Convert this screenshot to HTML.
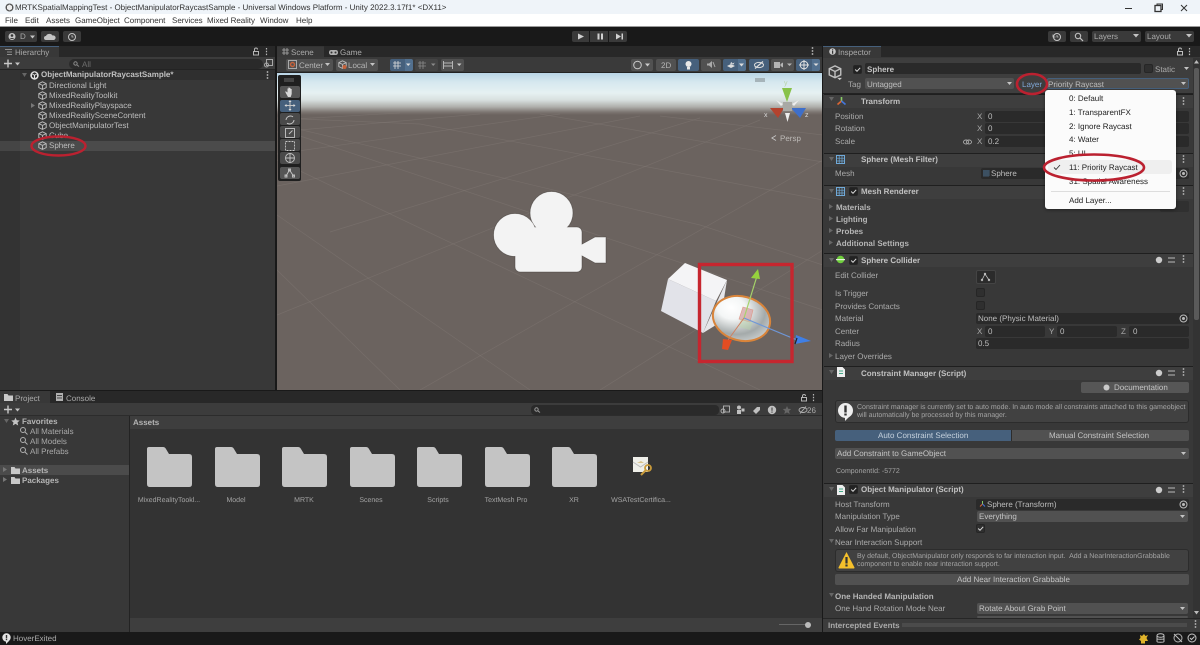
<!DOCTYPE html>
<html><head><meta charset="utf-8"><style>
html,body{margin:0;padding:0;background:#191919;overflow:hidden}
#r{position:relative;width:1200px;height:645px;overflow:hidden;font:8px/12px "Liberation Sans",sans-serif;color:#bdbdbd;text-rendering:geometricPrecision;filter:blur(.35px)}
#r div{position:absolute;box-sizing:border-box}
.t{white-space:nowrap;height:12px;margin-top:1px}
.b{font-weight:bold;color:#c0c0c0}
.k{color:#222}
.h{left:824px;width:369px;height:14px;background:#3e3e3e;border-top:1px solid #1f1f1f}
.f{background:#2a2a2a;height:11px;border-radius:2px}
.d{background:#515151;height:11px;border-radius:2px}
.p{background:#4d4d4d;border-radius:2px}
.bl{background:#46607c;border-radius:2px}
.c{background:#2f2f2f;border:1px solid #262626;border-radius:2px;width:9px;height:9px}
svg{position:absolute;overflow:visible}
</style></head><body><div id="r">
<!-- title + menu -->
<div style="left:0;top:0;width:1200px;height:14px;background:#eff4f9"></div>
<div style="left:0;top:14px;width:1200px;height:12px;background:#fff"></div>
<div style="left:0;top:26px;width:1200px;height:1px;background:#9a9a9a"></div>
<svg style="left:5px;top:3px" width="9" height="9" viewBox="0 0 9 9"><circle cx="4.500" cy="4.500" r="4" fill="#555"/><path d="M4.500 1.500L7 3v3L4.500 7.500 2 6V3z" fill="#eee"/></svg>
<div class="t k" style="left:15px;top:1px;color:#333">MRTKSpatialMappingTest - ObjectManipulatorRaycastSample - Universal Windows Platform - Unity 2022.3.17f1* &lt;DX11&gt;</div>
<div class="t k" style="left:5px;top:14px;color:#333">File</div>
<div class="t k" style="left:25px;top:14px;color:#333">Edit</div>
<div class="t k" style="left:46px;top:14px;color:#333">Assets</div>
<div class="t k" style="left:75px;top:14px;color:#333">GameObject</div>
<div class="t k" style="left:124px;top:14px;color:#333">Component</div>
<div class="t k" style="left:172px;top:14px;color:#333">Services</div>
<div class="t k" style="left:207px;top:14px;color:#333">Mixed Reality</div>
<div class="t k" style="left:260px;top:14px;color:#333">Window</div>
<div class="t k" style="left:296px;top:14px;color:#333">Help</div>
<svg style="left:1120px;top:2px" width="80" height="12" viewBox="0 0 80 12" fill="none" stroke="#333"><path d="M5 6.500h7" stroke-width="1"/><rect x="35" y="3.500" width="6" height="6" stroke-width="1.300"/><path d="M37 3.500V2h5.500v5.500H41"/><path d="M61 3l6 6M67 3l-6 6" stroke-width="1"/></svg>

<!-- main toolbar -->
<div style="left:0;top:27px;width:1200px;height:19px;background:#191919"></div>
<div class="p" style="left:5px;top:31px;width:32px;height:11px;background:#3a3a3a"></div>
<svg style="left:8px;top:32px" width="30" height="9" viewBox="0 0 30 9"><circle cx="4" cy="4.500" r="3.500" fill="#c4c4c4"/><circle cx="4" cy="3.500" r="1.300" fill="#333"/><path d="M1.800 7a2.500 2 0 014.400 0" fill="#333"/><path d="M22 3.500h5l-2.500 3z" fill="#c4c4c4"/></svg>
<div class="t" style="left:20px;top:30px;color:#aaa">D</div>
<div class="p" style="left:41px;top:31px;width:18px;height:11px;background:#3a3a3a"></div>
<svg style="left:44px;top:33px" width="12" height="7" viewBox="0 0 12 7"><path d="M2 7a2 2 0 010-4 3.500 3 0 016.500-.5A2.300 2.300 0 0110 7z" fill="#c4c4c4"/></svg>
<div class="p" style="left:63px;top:31px;width:18px;height:11px;background:#3a3a3a"></div>
<svg style="left:67px;top:32px" width="10" height="10" viewBox="0 0 10 10" fill="none" stroke="#c4c4c4"><circle cx="5" cy="5" r="3.500"/><path d="M5 3v2h1.500" stroke-width=".8"/></svg>
<div class="p" style="left:572px;top:31px;width:17px;height:11px;background:#3a3a3a;border-radius:2px 0 0 2px"></div>
<div class="p" style="left:590px;top:31px;width:18px;height:11px;background:#3a3a3a;border-radius:0"></div>
<div class="p" style="left:609px;top:31px;width:18px;height:11px;background:#3a3a3a;border-radius:0 2px 2px 0"></div>
<svg style="left:572px;top:31px" width="56" height="11" viewBox="0 0 56 11" fill="#d0d0d0"><path d="M6 2.500l6 3-6 3z"/><rect x="25.500" y="2.500" width="2" height="6"/><rect x="29" y="2.500" width="2" height="6"/><path d="M44 2.500l5 3-5 3z"/><rect x="49.500" y="2.500" width="1.500" height="6"/></svg>
<div class="p" style="left:1048px;top:31px;width:18px;height:11px;background:#3a3a3a"></div>
<svg style="left:1052px;top:32px" width="10" height="10" viewBox="0 0 10 10" fill="none" stroke="#c8c8c8"><circle cx="5" cy="5" r="3.500"/><path d="M5 3v2h1.500M1 2.500V5h2.500" stroke-width=".8"/></svg>
<div class="p" style="left:1070px;top:31px;width:18px;height:11px;background:#3a3a3a"></div>
<svg style="left:1074px;top:32px" width="10" height="10" viewBox="0 0 10 10" fill="none" stroke="#c8c8c8"><circle cx="4" cy="4" r="2.700"/><path d="M6 6l3 3" stroke-width="1.200"/></svg>
<div class="p" style="left:1092px;top:31px;width:49px;height:11px;background:#3a3a3a"></div>
<div class="t" style="left:1094px;top:30px;color:#aaa">Layers</div>
<svg style="left:1133px;top:34px" width="6" height="4"><path d="M0 0h6L3 3.500z" fill="#c4c4c4"/></svg>
<div class="p" style="left:1145px;top:31px;width:49px;height:11px;background:#3a3a3a"></div>
<div class="t" style="left:1147px;top:30px;color:#aaa">Layout</div>
<svg style="left:1186px;top:34px" width="6" height="4"><path d="M0 0h6L3 3.500z" fill="#c4c4c4"/></svg>

<!-- hierarchy -->
<div style="left:0;top:46px;width:275px;height:344px;background:#383838"></div>
<div style="left:0;top:46px;width:275px;height:11px;background:#282828"></div>
<div style="left:0;top:46px;width:59px;height:12px;background:#383838;border-top:1px solid #46607c"></div>
<svg style="left:5px;top:49px" width="8" height="6" stroke="#aaa" stroke-width=".8"><path d="M0 .5h7M2 3h5M2 5.500h5"/></svg>
<div class="t" style="left:15px;top:46px;color:#aaa">Hierarchy</div>
<svg style="left:252px;top:47px" width="18" height="9" viewBox="0 0 18 9" fill="none" stroke="#b5b5b5"><rect x="1.500" y="4.500" width="5" height="3.500"/><path d="M2.500 4.500V2.500a1.500 1.500 0 013 0"/><path d="M14.500 1v1.500M14.500 3.800v1.500M14.500 6.600v1.500" stroke-width="1.200"/></svg>
<div style="left:0;top:57px;width:275px;height:13px;background:#3c3c3c;border-bottom:1px solid #232323"></div>
<svg style="left:4px;top:59px" width="16" height="9" viewBox="0 0 16 9"><path d="M4 .5v8M0 4.500h8" stroke="#c8c8c8" stroke-width="1.400"/><path d="M11 3.500h5l-2.500 3z" fill="#c4c4c4"/></svg>
<div style="left:69px;top:59px;width:194px;height:10px;background:#2a2a2a;border-radius:5px"></div>
<div class="t" style="left:82px;top:57.500px;color:#6f6f6f">All</div>
<svg style="left:73px;top:61px" width="7" height="6" fill="none" stroke="#888"><circle cx="2.500" cy="2.500" r="1.700"/><path d="M4 4l2 1.500"/></svg>
<svg style="left:264px;top:59px" width="9" height="9" fill="none" stroke="#a8a8a8"><rect x="2.500" y=".5" width="6" height="6"/><circle cx="2.500" cy="6" r="2"/></svg>
<div style="left:0;top:70px;width:275px;height:10px;background:#2f2f2f"></div>
<div style="left:0;top:70px;width:20px;height:320px;background:#333"></div>
<div style="left:20px;top:141px;width:255px;height:10px;background:#4b4b4b"></div>
<div style="left:0;top:141px;width:20px;height:10px;background:#454545"></div>
<svg style="left:22px;top:73px" width="5" height="5"><path d="M0 0h5L2.500 4z" fill="#666"/></svg>
<svg style="left:30px;top:71px" width="9" height="9" viewBox="0 0 9 9"><circle cx="4.500" cy="4.500" r="4.200" fill="#e4e4e4"/><path d="M4.500 1.200L2.200 2.500 4.500 3.800 6.800 2.500zM2 3.300v2.600l2 1.200V4.500zM7 3.300v2.600L5 7.100V4.500z" fill="#333"/></svg>
<div class="t b" style="left:41px;top:68px">ObjectManipulatorRaycastSample*</div>
<svg style="left:266px;top:71px" width="3" height="9" fill="#bbb"><circle cx="1.500" cy="1" r=".9"/><circle cx="1.500" cy="4" r=".9"/><circle cx="1.500" cy="7" r=".9"/></svg>
<svg width="0" height="0"><defs><g id="cu" fill="none" stroke="#c0c0c0" stroke-width=".9"><path d="M4.500.8L8.200 2.600v4L4.500 8.400.8 6.600v-4zM.8 2.600l3.700 1.800 3.700-1.800M4.500 4.400v4"/></g></defs></svg>
<svg style="left:38px;top:81px" width="9" height="9"><use href="#cu"/></svg>
<svg style="left:38px;top:91px" width="9" height="9"><use href="#cu"/></svg>
<svg style="left:38px;top:101px" width="9" height="9"><use href="#cu"/></svg>
<svg style="left:38px;top:111px" width="9" height="9"><use href="#cu"/></svg>
<svg style="left:38px;top:121px" width="9" height="9"><use href="#cu"/></svg>
<svg style="left:38px;top:131px" width="9" height="9"><use href="#cu"/></svg>
<svg style="left:38px;top:141px" width="9" height="9"><use href="#cu"/></svg>
<svg style="left:31px;top:103px" width="5" height="6"><path d="M0 0l4 2.500L0 5z" fill="#777"/></svg>
<div class="t" style="left:49px;top:79px">Directional Light</div>
<div class="t" style="left:49px;top:89px">MixedRealityToolkit</div>
<div class="t" style="left:49px;top:99px">MixedRealityPlayspace</div>
<div class="t" style="left:49px;top:109px">MixedRealitySceneContent</div>
<div class="t" style="left:49px;top:119px">ObjectManipulatorTest</div>
<div class="t" style="left:49px;top:129px">Cube</div>
<div class="t" style="left:49px;top:139px">Sphere</div>
<svg style="left:0;top:0" width="1200" height="645" fill="none" stroke="#bb2130" stroke-width="2.400"><ellipse cx="58.500" cy="146" rx="27" ry="9.500"/></svg>

<!-- scene -->
<div style="left:275px;top:46px;width:2px;height:344px;background:#191919"></div>
<div style="left:277px;top:46px;width:546px;height:11px;background:#282828"></div>
<div style="left:277px;top:46px;width:47px;height:12px;background:#383838;border-top:1px solid #333"></div>
<div class="t" style="left:291px;top:46px;color:#aaa">Scene</div>
<div class="t" style="left:340px;top:46px;color:#aaa">Game</div>
<svg style="left:282px;top:48px" width="7" height="7" stroke="#aaa" stroke-width=".8"><path d="M2 0v7M5 0v7M0 2h7M0 5h7"/></svg>
<svg style="left:329px;top:50px" width="9" height="5"><rect width="9" height="5" rx="2.300" fill="#b0b0b0"/><circle cx="2.500" cy="2.500" r="1" fill="#333"/><circle cx="6.500" cy="2.500" r="1" fill="#333"/></svg>
<svg style="left:811px;top:47px" width="3" height="9" fill="#bbb"><circle cx="1.500" cy="1" r=".9"/><circle cx="1.500" cy="4" r=".9"/><circle cx="1.500" cy="7" r=".9"/></svg>
<div style="left:277px;top:57px;width:546px;height:16px;background:#3a3a3a;border-bottom:1px solid #222"></div>
<div class="p" style="left:286px;top:59px;width:47px;height:12px;background:#515151"></div>
<div class="t" style="left:299px;top:59px;color:#b5b5b5">Center</div>
<svg style="left:288px;top:60px" width="10" height="10" fill="none"><rect x=".5" y=".5" width="8" height="8" stroke="#aaa"/><circle cx="4.500" cy="4.500" r="2" stroke="#c6623a" stroke-width="1.400"/></svg>
<svg style="left:325px;top:63px" width="6" height="4"><path d="M0 0h5L2.500 3z" fill="#c4c4c4"/></svg>
<div class="p" style="left:336px;top:59px;width:42px;height:12px;background:#515151"></div>
<div class="t" style="left:348px;top:59px;color:#b5b5b5">Local</div>
<svg style="left:338px;top:60px" width="10" height="10"><use href="#cu"/><circle cx="6.500" cy="7" r="2" fill="#c6623a"/></svg>
<svg style="left:370px;top:63px" width="6" height="4"><path d="M0 0h5L2.500 3z" fill="#c4c4c4"/></svg>
<div class="bl" style="left:390px;top:59px;width:15px;height:12px;border-radius:2px 0 0 2px"></div>
<div class="bl" style="left:405px;top:59px;width:8px;height:12px;border-radius:0 2px 2px 0;background:#52708f"></div>
<svg style="left:393px;top:61px" width="18" height="8" stroke="#dcdcdc" stroke-width=".8"><path d="M2 0v8M5 0v8M0 2h8M0 5h8"/><path d="M13 2.500h4.500L15.200 5z" fill="#ddd" stroke="none"/></svg>
<div class="p" style="left:415px;top:59px;width:23px;height:12px;background:#444"></div>
<svg style="left:418px;top:61px" width="18" height="8" stroke="#8a8a8a" stroke-width=".8"><path d="M2 0v8M5 0v8M0 2h8M0 5h8"/><path d="M13 2.500h4.500L15.200 5z" fill="#8a8a8a" stroke="none"/></svg>
<div class="p" style="left:441px;top:59px;width:23px;height:12px;background:#515151"></div>
<svg style="left:443px;top:61px" width="19" height="8" stroke="#b5b5b5"><path d="M.5 0v8M9.500 0v8M1 2h8M1 5h8"/><path d="M14 2.500h4.500L16.200 5z" fill="#ccc" stroke="none"/></svg>
<div class="p" style="left:631px;top:59px;width:22px;height:12px;background:#515151"></div>
<svg style="left:633px;top:60px" width="18" height="10" fill="none" stroke="#ccc"><circle cx="4.500" cy="5" r="3.800"/><path d="M12 3.500h5l-2.500 3z" fill="#ccc" stroke="none"/></svg>
<div class="p" style="left:656px;top:59px;width:20px;height:12px;background:#515151"></div>
<div class="t" style="left:661px;top:59px;color:#b5b5b5">2D</div>
<div class="bl" style="left:678px;top:59px;width:21px;height:12px"></div>
<svg style="left:684px;top:60px" width="9" height="10" fill="#e8e8e8"><circle cx="4.500" cy="4" r="3"/><rect x="3" y="7" width="3" height="2.500"/></svg>
<div class="p" style="left:701px;top:59px;width:20px;height:12px;background:#515151"></div>
<svg style="left:707px;top:61px" width="9" height="8" fill="#aaa"><path d="M0 2.500h2L5 0v7L2 4.500H0z"/><path d="M6 1l2 5" stroke="#aaa"/></svg>
<div class="bl" style="left:723px;top:59px;width:15px;height:12px;border-radius:2px 0 0 2px"></div>
<div class="bl" style="left:738px;top:59px;width:8px;height:12px;border-radius:0 2px 2px 0;background:#52708f"></div>
<svg style="left:726px;top:60px" width="19" height="10" fill="#ddd"><path d="M1 6l4-2 4 2-4 2zM4 3.500l1.500-1.500 1 1.500 2-1-1 2z"/><path d="M13 3.500h5l-2.500 3z"/></svg>
<div class="bl" style="left:749px;top:59px;width:20px;height:12px"></div>
<svg style="left:754px;top:61px" width="11" height="8" fill="none" stroke="#ddd"><ellipse cx="5" cy="4" rx="4.500" ry="2.600"/><path d="M1 7.500L9 .5" stroke-width="1.200"/></svg>
<div class="p" style="left:771px;top:59px;width:23px;height:12px;background:#515151"></div>
<svg style="left:774px;top:61px" width="19" height="8" fill="#b5b5b5"><path d="M0 1h6v6H0zM6.500 3L9 1.500v5L6.500 5z"/><path d="M13 2.500h5L15.500 5z"/></svg>
<div class="bl" style="left:796px;top:59px;width:16px;height:12px;border-radius:2px 0 0 2px"></div>
<div class="bl" style="left:812px;top:59px;width:8px;height:12px;border-radius:0 2px 2px 0;background:#52708f"></div>
<svg style="left:799px;top:60px" width="20" height="10" fill="none" stroke="#e0e0e0"><circle cx="5" cy="5" r="3.800"/><path d="M5 0v10M0 5h10"/><path d="M14.500 3.500h5L17 6z" fill="#ddd" stroke="none"/></svg>

<div style="left:277px;top:73px;width:546px;height:317px;background:linear-gradient(to bottom,#b8d4e6 0,#d6e8ef 9px,#e6f1f2 20px,#d8e0df 27px,#aeaeaa 34px,#7d7672 39px,#6b635f 42px,#6b635f 100%)"></div>
<svg style="left:277px;top:73px;clip-path:inset(0 0 0 0)" width="546" height="317" viewBox="277 73 546 317" fill="none" stroke="#857c77" stroke-opacity=".45" stroke-width=".7">
<path d="M277 132L480 114M277 154L560 114M277 186L640 116M330 232L700 118M277 315L760 120M420 390L823 160M600 390L823 250M277 120L400 113"/>
<path d="M277 118L420 124 823 200M277 124L700 225 823 265M300 136L823 310M277 160L760 390M277 215L530 390M277 270L400 390M540 114L823 162M660 116L823 135"/>
</svg>
<!-- tool palette -->
<div style="left:278px;top:75px;width:23px;height:106px;background:#1f1f1f;border-radius:2px"></div>
<div style="left:284px;top:78px;width:10px;height:4px;background:#444"></div>
<div class="p" style="left:279.500px;top:86px;width:20px;height:12px;background:#555"></div>
<div class="bl" style="left:279.500px;top:100px;width:20px;height:12px;background:#46607c"></div>
<div class="p" style="left:279.500px;top:113px;width:20px;height:12px;background:#4a4a4a"></div>
<div class="p" style="left:279.500px;top:126px;width:20px;height:12px;background:#4a4a4a"></div>
<div class="p" style="left:279.500px;top:139px;width:20px;height:12px;background:#4a4a4a"></div>
<div class="p" style="left:279.500px;top:152px;width:20px;height:12px;background:#4a4a4a"></div>
<div class="p" style="left:279.500px;top:167px;width:20px;height:12px;background:#555"></div>
<svg style="left:280px;top:86px" width="20" height="93" viewBox="0 0 20 93" fill="none" stroke="#c4c4c4" stroke-width=".9">
<path d="M5.500 5l2 1.500V2.500h1V6V1.500h1V6V2h1v4.500V3h1.200v5l-1 3H8L5.500 6.500z" fill="#d8d8d8" stroke="none"/>
<path d="M10 15.500v8M6 19.500h8" stroke-width="1"/><path d="M10 14l1.500 2h-3zM10 25l1.500-2h-3zM4.500 19.500l2-1.500v3zM15.500 19.500l-2-1.500v3z" fill="#ddd" stroke="none"/>
<path d="M6 34a4.500 4.500 0 017-3.200M14 34a4.500 4.500 0 01-7 3.200" stroke-width="1"/>
<rect x="5.500" y="42.500" width="9" height="9" /><path d="M9 48l3.500-3.500" />
<rect x="5.500" y="55.500" width="9" height="9" stroke-dasharray="2 1"/>
<circle cx="10" cy="72" r="4.500"/><path d="M5.500 72h9M10 67.500v9"/>
<path d="M6 90l3.500-6 4 6M5 89h2v2H5zM8.500 83h2v2h-2zM12.500 89h2v2h-2z"/>
</svg>
<!-- orientation gizmo -->
<div style="left:755px;top:78px;width:10px;height:4px;background:#a6b4ba"></div>
<svg style="left:760px;top:78px" width="60" height="50" viewBox="760 78 60 50">
<path d="M782 88h10l-5 14z" fill="#88c24a"/><path d="M770 108h14l-6 10z" fill="#b3432e"/><path d="M791 108h15l-6 10z" fill="#3e6fca"/>
<rect x="783" y="102" width="9" height="9" fill="#a9a9a5"/>
<path d="M787.500 122l-2.500-9h5z" fill="#eee"/><path d="M776 100l7 4-2 2z" fill="#eee"/><path d="M799 100l-7 4 2 2z" fill="#eee"/>
</svg>
<div class="t" style="left:784px;top:77px;color:#b5d3a8;font-size:7px">y</div>
<div class="t" style="left:764px;top:109px;color:#ddd;font-size:7px">x</div>
<div class="t" style="left:805px;top:109px;color:#ddd;font-size:7px">z</div>
<div class="t" style="left:780px;top:132px;color:#bdbab7">Persp</div>
<svg style="left:771px;top:135px" width="6" height="6" fill="none" stroke="#c8c8c8" stroke-width=".8"><path d="M5 .5L.8 3 5 5.500"/></svg>
<!-- camera icon -->
<svg style="left:480px;top:180px" width="140" height="100" viewBox="480 180 140 100">
<g fill="#f3f3f3" stroke="#3f3a37" stroke-opacity=".55" stroke-width=".8"><path d="M581 245l14-8h11v26h-11l-14-8z"/><circle cx="551.500" cy="213" r="21.500"/><circle cx="515" cy="235" r="21.500"/><rect x="515" y="227" width="67" height="45" rx="5"/></g>
<g fill="#f3f3f3"><circle cx="551.500" cy="213" r="21"/><circle cx="515" cy="235" r="21"/><rect x="515.500" y="227.500" width="66" height="44" rx="5"/><path d="M580 245.500l15-8h10.500v25H595l-15-8z"/></g>
</svg>
<!-- cube + sphere + gizmo -->
<svg style="left:640px;top:250px" width="190" height="120" viewBox="640 250 190 120">
<path d="M685 263l42 17-11 21-48-22z" fill="#f4f4f6"/><path d="M668 279l48 22-13 32-42-22z" fill="#e2e3e9"/><path d="M727 280l-24 53 13-8 7-20z" fill="#e6e6ea"/>
<defs><radialGradient id="sp" cx=".28" cy=".32" r=".85"><stop offset="0" stop-color="#fff"/><stop offset=".3" stop-color="#f4f6f6"/><stop offset=".7" stop-color="#a4aaaa"/><stop offset="1" stop-color="#d4d8d8"/></radialGradient></defs>
<ellipse cx="741.500" cy="318.500" rx="29" ry="22" transform="rotate(15 741.500 318.500)" fill="url(#sp)" stroke="#d9843a" stroke-width="2"/>
<path d="M743 307l10 3-3 12-11-3z" fill="#d8a8aa" fill-opacity=".8" stroke="#d98" stroke-width=".6"/>
<path d="M741 318l12 4-3 8-11-3z" fill="#b8d4a8" fill-opacity=".45"/>
<path d="M744 318L757 276" stroke="#a5d36a" stroke-width="1.200"/><path d="M758 269l-7 9 9 1z" fill="#96d23d"/>
<path d="M744 318L728 340" stroke="#d08060" stroke-width="1"/><path d="M723 339l9 1-4 10-6-1z" fill="#e34d22"/>
<path d="M744 318L797 340" stroke="#6e97d8" stroke-width="1.200"/><path d="M796 335l15 6-16 3z" fill="#3f7fe6"/><path d="M797 338l-2 6" stroke="#222" stroke-width="1.200"/>
<rect x="699.500" y="264.500" width="92.500" height="97" fill="none" stroke="#c6262f" stroke-width="3.400"/>
</svg>

<!-- inspector bg -->
<div style="left:822px;top:46px;width:1px;height:586px;background:#191919"></div>
<div style="left:823px;top:46px;width:377px;height:586px;background:#383838"></div>
<div style="left:823px;top:46px;width:377px;height:11px;background:#282828"></div>
<div style="left:823px;top:46px;width:58px;height:12px;background:#383838;border-top:1px solid #46607c"></div>
<div class="t" style="left:838px;top:46px;color:#aaa">Inspector</div>
<svg style="left:829px;top:48px" width="7" height="7"><circle cx="3.500" cy="3.500" r="3.300" fill="#c8c8c8"/><rect x="3" y="2.800" width="1.200" height="3" fill="#333"/><rect x="3" y="1.300" width="1.200" height="1" fill="#333"/></svg>
<svg style="left:1176px;top:47px" width="18" height="9" viewBox="0 0 18 9" fill="none" stroke="#c0c0c0"><rect x="1.500" y="4.500" width="5" height="3.500"/><path d="M2.500 4.500V2.500a1.500 1.500 0 013 0"/><path d="M13.500 1v1.500M13.500 3.800v1.500M13.500 6.600v1.500" stroke-width="1.200"/></svg>
<!-- scrollbar -->
<div style="left:1193px;top:58px;width:7px;height:560px;background:#333"></div>
<div style="left:1194px;top:68px;width:5px;height:252px;background:#5a5a5a;border-radius:2px"></div>
<svg style="left:1194px;top:60px" width="6" height="4"><path d="M0 3.500h5L2.500 0z" fill="#bbb"/></svg>
<svg style="left:1194px;top:611px" width="6" height="4"><path d="M0 0h5L2.500 3.500z" fill="#bbb"/></svg>
<!-- object header -->
<div style="left:823px;top:58px;width:370px;height:36px;background:#3e3e3e;border-bottom:1px solid #222"></div>
<svg style="left:828px;top:64px" width="14" height="16" viewBox="0 0 9 9.500"><use href="#cu"/><path d="M6 8.500h3L7.500 10z" fill="#ccc"/></svg>
<div class="c" style="left:853px;top:65px;background:#222"></div>
<svg style="left:854px;top:66px" width="8" height="8" fill="none" stroke="#ddd"><path d="M1.200 3.500l1.800 1.800 3.200-3.500"/></svg>
<div class="f" style="left:865px;top:63px;width:276px"></div>
<div class="t b" style="left:867px;top:62.500px">Sphere</div>
<div class="c" style="left:1144px;top:64px"></div>
<div class="t" style="left:1155px;top:62.500px;color:#aaa">Static</div>
<svg style="left:1184px;top:67px" width="6" height="4"><path d="M0 0h5L2.500 3z" fill="#c4c4c4"/></svg>
<div class="t" style="left:848px;top:78px;color:#aaa">Tag</div>
<div class="d" style="left:865px;top:78px;width:149px"></div>
<div class="t" style="left:867px;top:77.500px">Untagged</div>
<svg style="left:1007px;top:82px" width="6" height="4"><path d="M0 0h5L2.500 3z" fill="#c4c4c4"/></svg>
<div class="t" style="left:1022px;top:78px;color:#7fa6d6">Layer</div>
<div class="d" style="left:1047px;top:78px;width:142px;border:1px solid #46607c"></div>
<div class="t" style="left:1048px;top:77.500px">Priority Raycast</div>
<svg style="left:1181px;top:82px" width="6" height="4"><path d="M0 0h5L2.500 3z" fill="#c4c4c4"/></svg>

<!-- Transform -->
<div class="h" style="top:94px"></div>
<svg style="left:829px;top:97px" width="5" height="5"><path d="M0 0h5L2.500 4z" fill="#666"/></svg>
<svg style="left:836px;top:96px" width="11" height="10"><path d="M5.500 5V1" stroke="#8c6" stroke-width="1.600"/><path d="M5.500 5L1.500 8.500" stroke="#d63" stroke-width="1.600"/><path d="M5.500 5l4 3.500" stroke="#47d" stroke-width="1.600"/></svg>
<div class="t b" style="left:861px;top:94.500px">Transform</div>
<svg style="left:1182px;top:97px" width="3" height="9" fill="#bbb"><circle cx="1.500" cy="1" r=".9"/><circle cx="1.500" cy="4" r=".9"/><circle cx="1.500" cy="7" r=".9"/></svg>
<div class="t" style="left:835px;top:110px;color:#aaa">Position</div>
<div class="t" style="left:835px;top:122px;color:#aaa">Rotation</div>
<div class="t" style="left:835px;top:135px;color:#aaa">Scale</div>
<div class="t" style="left:977px;top:110px;color:#aaa">X</div><div class="f" style="left:985px;top:111px;width:204px"></div><div class="t" style="left:988px;top:110px">0</div>
<div class="t" style="left:977px;top:122px;color:#aaa">X</div><div class="f" style="left:985px;top:123px;width:204px"></div><div class="t" style="left:988px;top:122px">0</div>
<div class="t" style="left:977px;top:135px;color:#aaa">X</div><div class="f" style="left:985px;top:136px;width:204px"></div><div class="t" style="left:988px;top:135px">0.2</div>
<svg style="left:963px;top:139px" width="9" height="6" fill="none" stroke="#aaa" stroke-width=".9"><ellipse cx="3" cy="3" rx="2.500" ry="2"/><ellipse cx="6" cy="3" rx="2.500" ry="2"/></svg>
<!-- Mesh Filter -->
<div class="h" style="top:153px"></div>
<svg style="left:829px;top:157px" width="5" height="5"><path d="M0 0h5L2.500 4z" fill="#666"/></svg>
<svg style="left:836px;top:155px" width="10" height="10" fill="none" stroke="#6fa9d8"><rect x=".5" y=".5" width="8" height="8"/><path d="M3.200 .5v8M6 .5v8M.5 3.200h8M.5 6h8" stroke-width=".7"/></svg>
<div class="t b" style="left:861px;top:153px">Sphere (Mesh Filter)</div>
<svg style="left:1182px;top:155px" width="3" height="9" fill="#bbb"><circle cx="1.500" cy="1" r=".9"/><circle cx="1.500" cy="4" r=".9"/><circle cx="1.500" cy="7" r=".9"/></svg>
<div class="t" style="left:835px;top:167px;color:#aaa">Mesh</div>
<div class="f" style="left:981px;top:168px;width:208px"></div>
<div class="t" style="left:991px;top:167px">Sphere</div>
<svg style="left:983px;top:170px" width="7" height="7" stroke="#4a6a88" stroke-width=".7"><path d="M1 0v7M3 0v7M5 0v7M0 1h7M0 3h7M0 5h7"/></svg>
<svg style="left:1179px;top:169px" width="9" height="9" fill="none" stroke="#bbb"><circle cx="4.500" cy="4.500" r="3.500"/><circle cx="4.500" cy="4.500" r="1" fill="#bbb"/></svg>
<!-- Mesh renderer -->
<div class="h" style="top:185px"></div>
<svg style="left:829px;top:189px" width="5" height="5"><path d="M0 0h5L2.500 4z" fill="#666"/></svg>
<svg style="left:836px;top:187px" width="10" height="10" fill="none" stroke="#6fa9d8"><rect x=".5" y=".5" width="8" height="8"/><path d="M3.200 .5v8M6 .5v8M.5 3.200h8M.5 6h8" stroke-width=".7"/></svg>
<div class="c" style="left:849px;top:187px;background:#222"></div>
<svg style="left:850px;top:188px" width="8" height="8" fill="none" stroke="#ddd"><path d="M1.200 3.500l1.800 1.800 3.200-3.500"/></svg>
<div class="t b" style="left:861px;top:185px">Mesh Renderer</div>
<svg style="left:1182px;top:187px" width="3" height="9" fill="#bbb"><circle cx="1.500" cy="1" r=".9"/><circle cx="1.500" cy="4" r=".9"/><circle cx="1.500" cy="7" r=".9"/></svg>
<div class="t b" style="left:836px;top:201px;color:#b5b5b5">Materials</div>
<div class="t b" style="left:836px;top:213px;color:#b5b5b5">Lighting</div>
<div class="t b" style="left:836px;top:225px;color:#b5b5b5">Probes</div>
<div class="t b" style="left:836px;top:237px;color:#b5b5b5">Additional Settings</div>
<svg style="left:829px;top:204px" width="5" height="42" fill="#666"><path d="M0 0l4 2.500L0 5zM0 12l4 2.500L0 17zM0 24l4 2.500L0 29zM0 36l4 2.500L0 41z"/></svg>
<div class="f" style="left:1160px;top:201px;width:29px;height:11px;background:#303030"></div>
<!-- Sphere collider -->
<div class="h" style="top:253px"></div>
<svg style="left:829px;top:258px" width="5" height="5"><path d="M0 0h5L2.500 4z" fill="#666"/></svg>
<svg style="left:836px;top:255px" width="9" height="9"><circle cx="4.500" cy="4.500" r="3.800" fill="#6fcf3c"/><rect y="4" width="9" height="1.200" fill="#e8f5e0"/></svg>
<div class="c" style="left:849px;top:256px;background:#222"></div>
<svg style="left:850px;top:257px" width="8" height="8" fill="none" stroke="#ddd"><path d="M1.200 3.500l1.800 1.800 3.200-3.500"/></svg>
<div class="t b" style="left:861px;top:254px">Sphere Collider</div>
<svg style="left:1155px;top:255px" width="30" height="10"><circle cx="4" cy="5" r="3.200" fill="#ccc"/><path d="M13 3h7M13 7h7" stroke="#bbb" stroke-width=".9"/><g fill="#bbb"><circle cx="28.500" cy="1" r=".9"/><circle cx="28.500" cy="4" r=".9"/><circle cx="28.500" cy="7" r=".9"/></g></svg>
<div class="t" style="left:835px;top:269px;color:#aaa">Edit Collider</div>
<div style="left:976px;top:270px;width:20px;height:14px;background:#2b2b2b;border:1px solid #444;border-radius:2px"></div>
<svg style="left:981px;top:273px" width="10" height="8" fill="none" stroke="#c0c0c0" stroke-width=".8"><path d="M1 7l3-6 4 6"/><circle cx="1" cy="7" r=".8"/><circle cx="4" cy="1" r=".8"/><circle cx="8" cy="7" r=".8"/></svg>
<div class="t" style="left:835px;top:287px;color:#aaa">Is Trigger</div><div class="c" style="left:976px;top:288px"></div>
<div class="t" style="left:835px;top:300px;color:#aaa">Provides Contacts</div><div class="c" style="left:976px;top:301px"></div>
<div class="t" style="left:835px;top:312px;color:#aaa">Material</div><div class="f" style="left:976px;top:313px;width:213px"></div>
<div class="t" style="left:978px;top:312px">None (Physic Material)</div>
<svg style="left:1179px;top:314px" width="9" height="9" fill="none" stroke="#bbb"><circle cx="4.500" cy="4.500" r="3.500"/><circle cx="4.500" cy="4.500" r="1" fill="#bbb"/></svg>
<div class="t" style="left:835px;top:325px;color:#aaa">Center</div>
<div class="t" style="left:977px;top:325px;color:#aaa">X</div><div class="f" style="left:985px;top:326px;width:60px"></div><div class="t" style="left:988px;top:325px">0</div>
<div class="t" style="left:1049px;top:325px;color:#aaa">Y</div><div class="f" style="left:1057px;top:326px;width:60px"></div><div class="t" style="left:1060px;top:325px">0</div>
<div class="t" style="left:1121px;top:325px;color:#aaa">Z</div><div class="f" style="left:1129px;top:326px;width:60px"></div><div class="t" style="left:1133px;top:325px">0</div>
<div class="t" style="left:835px;top:337px;color:#aaa">Radius</div><div class="f" style="left:976px;top:338px;width:213px"></div><div class="t" style="left:978px;top:337px">0.5</div>
<svg style="left:829px;top:353px" width="5" height="6"><path d="M0 0l4 2.500L0 5z" fill="#666"/></svg>
<div class="t" style="left:835px;top:350px;color:#aaa">Layer Overrides</div>
<!-- Constraint manager -->
<div class="h" style="top:366px"></div>
<svg style="left:829px;top:370px" width="5" height="5"><path d="M0 0h5L2.500 4z" fill="#666"/></svg>
<svg style="left:837px;top:367px" width="8" height="10"><path d="M0 0h5.500L8 2.500V10H0z" fill="#eee"/><path d="M2 4h4M2 6.500h4" stroke="#4a8" stroke-width="1"/></svg>
<div class="t b" style="left:861px;top:367px">Constraint Manager (Script)</div>
<svg style="left:1155px;top:368px" width="30" height="10"><circle cx="4" cy="5" r="3.200" fill="#ccc"/><path d="M13 3h7M13 7h7" stroke="#bbb" stroke-width=".9"/><g fill="#bbb"><circle cx="28.500" cy="1" r=".9"/><circle cx="28.500" cy="4" r=".9"/><circle cx="28.500" cy="7" r=".9"/></g></svg>
<div class="d" style="left:1081px;top:382px;width:108px;background:#565656"></div>
<svg style="left:1103px;top:384px" width="7" height="7"><circle cx="3.500" cy="3.500" r="3" fill="#c8c8c8"/></svg>
<div class="t" style="left:1114px;top:381px;color:#c4c4c4">Documentation</div>
<div style="left:835px;top:400px;width:354px;height:23px;background:#414141;border:1px solid #2c2c2c;border-radius:3px"></div>
<svg style="left:838px;top:402px" width="15" height="19"><circle cx="7.500" cy="8.500" r="7.500" fill="#eee"/><path d="M7 15v4l4-4z" fill="#eee"/><rect x="6.300" y="3.500" width="2.400" height="7" fill="#333"/><rect x="6.300" y="11.500" width="2.400" height="2" fill="#333"/></svg>
<div class="t" style="left:857px;top:401px;font-size:7px;color:#a5a5a5">Constraint manager is currently set to auto mode. In auto mode all constraints attached to this gameobject</div>
<div class="t" style="left:857px;top:409px;font-size:7px;color:#a5a5a5">will automatically be processed by this manager.</div>
<div style="left:835px;top:430px;width:176px;height:11px;background:#46607c;border-radius:2px 0 0 2px"></div>
<div style="left:1011px;top:430px;width:178px;height:11px;background:#515151;border-radius:0 2px 2px 0;border-left:1px solid #2c2c2c"></div>
<div class="t" style="left:878px;top:429px;color:#c4d0dc">Auto Constraint Selection</div>
<div class="t" style="left:1049px;top:429px;color:#c4c4c4">Manual Constraint Selection</div>
<div class="d" style="left:835px;top:448px;width:354px"></div>
<div class="t" style="left:837px;top:447px;color:#c4c4c4">Add Constraint to GameObject</div>
<svg style="left:1181px;top:452px" width="6" height="4"><path d="M0 0h5L2.500 3z" fill="#c4c4c4"/></svg>
<div class="t" style="left:836px;top:465px;font-size:7px;color:#a5a5a5">ComponentId: -5772</div>
<!-- Object Manipulator -->
<div class="h" style="top:483px"></div>
<svg style="left:829px;top:487px" width="5" height="5"><path d="M0 0h5L2.500 4z" fill="#666"/></svg>
<svg style="left:837px;top:485px" width="8" height="10"><path d="M0 0h5.500L8 2.500V10H0z" fill="#eee"/><path d="M2 4h4M2 6.500h4" stroke="#4a8" stroke-width="1"/></svg>
<div class="c" style="left:849px;top:485px;background:#222"></div>
<svg style="left:850px;top:486px" width="8" height="8" fill="none" stroke="#ddd"><path d="M1.200 3.500l1.800 1.800 3.200-3.500"/></svg>
<div class="t b" style="left:861px;top:482.500px">Object Manipulator (Script)</div>
<svg style="left:1155px;top:484.500px" width="30" height="10"><circle cx="4" cy="5" r="3.200" fill="#ccc"/><path d="M13 3h7M13 7h7" stroke="#bbb" stroke-width=".9"/><g fill="#bbb"><circle cx="28.500" cy="1" r=".9"/><circle cx="28.500" cy="4" r=".9"/><circle cx="28.500" cy="7" r=".9"/></g></svg>
<div class="t" style="left:835px;top:498px;color:#aaa">Host Transform</div><div class="f" style="left:976px;top:499px;width:213px"></div>
<svg style="left:979px;top:500px" width="8" height="8"><path d="M3.500 4V1" stroke="#8c6" stroke-width="1"/><path d="M3.500 4L1 6.500" stroke="#d63" stroke-width="1"/><path d="M3.500 4l2.500 2.500" stroke="#47d" stroke-width="1"/></svg>
<div class="t" style="left:987px;top:498px">Sphere (Transform)</div>
<svg style="left:1179px;top:500px" width="9" height="9" fill="none" stroke="#bbb"><circle cx="4.500" cy="4.500" r="3.500"/><circle cx="4.500" cy="4.500" r="1" fill="#bbb"/></svg>
<div class="t" style="left:835px;top:510px;color:#aaa">Manipulation Type</div><div class="d" style="left:977px;top:511px;width:211px"></div>
<div class="t" style="left:979px;top:510px;color:#c4c4c4">Everything</div>
<svg style="left:1180px;top:515px" width="6" height="4"><path d="M0 0h5L2.500 3z" fill="#c4c4c4"/></svg>
<div class="t" style="left:835px;top:523px;color:#aaa">Allow Far Manipulation</div><div class="c" style="left:976px;top:524px"></div>
<svg style="left:977px;top:525px" width="8" height="8" fill="none" stroke="#ddd"><path d="M1.200 3.500l1.800 1.800 3.200-3.500"/></svg>
<svg style="left:829px;top:539px" width="5" height="5"><path d="M0 0h5L2.500 4z" fill="#666"/></svg>
<div class="t" style="left:835px;top:536px;color:#aaa">Near Interaction Support</div>
<div style="left:835px;top:549px;width:354px;height:23px;background:#414141;border:1px solid #2c2c2c;border-radius:3px"></div>
<svg style="left:838px;top:551px" width="17" height="18"><path d="M8.500 1L16.500 16.500a.8.800 0 01-.6 1H1.100a.8.800 0 01-.6-1z" fill="#f5c02b"/><rect x="7.400" y="6" width="2.200" height="6.500" fill="#333"/><rect x="7.400" y="13.500" width="2.200" height="2" fill="#333"/></svg>
<div class="t" style="left:857px;top:550px;font-size:7px;color:#a5a5a5">By default, ObjectManipulator only responds to far interaction input.&nbsp; Add a NearInteractionGrabbable</div>
<div class="t" style="left:857px;top:558px;font-size:7px;color:#a5a5a5">component to enable near interaction support.</div>
<div class="d" style="left:835px;top:574px;width:354px"></div>
<div class="t" style="left:957px;top:573px;color:#c4c4c4">Add Near Interaction Grabbable</div>
<svg style="left:829px;top:593px" width="5" height="5"><path d="M0 0h5L2.500 4z" fill="#666"/></svg>
<div class="t b" style="left:835px;top:590px;color:#b5b5b5">One Handed Manipulation</div>
<div class="t" style="left:835px;top:602px;color:#aaa">One Hand Rotation Mode Near</div>
<div class="d" style="left:977px;top:603px;width:211px"></div>
<div class="t" style="left:979px;top:602px;color:#c4c4c4">Rotate About Grab Point</div>
<svg style="left:1180px;top:607px" width="6" height="4"><path d="M0 0h5L2.500 3z" fill="#c4c4c4"/></svg>
<div class="d" style="left:977px;top:616px;width:211px;height:2px"></div>
<div style="left:823px;top:618px;width:377px;height:14px;background:#3c3c3c;border-top:1px solid #262626"></div>
<div class="t b" style="left:828px;top:619px;color:#aaa">Intercepted Events</div>
<div style="left:902px;top:623px;width:285px;height:4px;background:#4b4b4b"></div>
<svg style="left:1194px;top:620px" width="3" height="9" fill="#bbb"><circle cx="1.500" cy="1" r=".9"/><circle cx="1.500" cy="4" r=".9"/><circle cx="1.500" cy="7" r=".9"/></svg>

<!-- layer menu -->
<div style="left:1045px;top:90px;width:131px;height:119px;background:#fbfbfb;border-radius:3px;box-shadow:0 1px 3px rgba(0,0,0,.4)"></div>
<div style="left:1048px;top:160px;width:124px;height:14px;background:#efefef;border-radius:3px"></div>
<div class="t k" style="left:1069px;top:92px">0: Default</div>
<div class="t k" style="left:1069px;top:106px">1: TransparentFX</div>
<div class="t k" style="left:1069px;top:120px">2: Ignore Raycast</div>
<div class="t k" style="left:1069px;top:133px">4: Water</div>
<div class="t k" style="left:1069px;top:147px">5: UI</div>
<div class="t k" style="left:1069px;top:161px">11: Priority Raycast</div>
<div class="t k" style="left:1069px;top:175px">31: Spatial Awareness</div>
<div style="left:1051px;top:191px;width:119px;height:1px;background:#ddd"></div>
<div class="t k" style="left:1069px;top:194px">Add Layer...</div>
<svg style="left:1053px;top:164px" width="8" height="7" fill="none" stroke="#333" stroke-width=".9"><path d="M1 3.500l2 2 4-4.500"/></svg>
<svg style="left:0;top:0" width="1200" height="645" fill="none" stroke="#bb2130" stroke-width="2.600"><ellipse cx="1032" cy="84" rx="15" ry="10"/><ellipse cx="1094" cy="167.500" rx="50" ry="13"/></svg>

<!-- project -->
<div style="left:0;top:390px;width:822px;height:1px;background:#191919"></div>
<div style="left:0;top:391px;width:822px;height:12px;background:#282828"></div>
<div style="left:0;top:391px;width:50px;height:12px;background:#383838"></div>
<svg style="left:4px;top:394px" width="9" height="7"><path d="M0 0h3.500l1 1.500H9V7H0z" fill="#c8c8c8"/></svg>
<div class="t" style="left:15px;top:391.500px;color:#aaa">Project</div>
<svg style="left:56px;top:393px" width="7" height="8"><rect width="7" height="8" fill="#b0b0b0"/><path d="M1 2.500h5M1 5h5" stroke="#444"/></svg>
<div class="t" style="left:66px;top:391.500px;color:#aaa">Console</div>
<svg style="left:800px;top:394px" width="18" height="9" viewBox="0 0 18 9" fill="none" stroke="#b5b5b5"><rect x="1.500" y="3.500" width="5" height="3.500"/><path d="M2.500 3.500V2a1.500 1.500 0 013 0"/><path d="M13.500 0v1.500M13.500 2.800v1.500M13.500 5.600v1.500" stroke-width="1.200"/></svg>
<div style="left:0;top:403px;width:822px;height:13px;background:#3c3c3c;border-bottom:1px solid #2c2c2c"></div>
<svg style="left:4px;top:405px" width="16" height="9" viewBox="0 0 16 9"><path d="M4 .5v8M0 4.500h8" stroke="#c8c8c8" stroke-width="1.400"/><path d="M11 3.500h5l-2.500 3z" fill="#c4c4c4"/></svg>
<div style="left:531px;top:405px;width:188px;height:10px;background:#2a2a2a;border-radius:4px"></div>
<svg style="left:534px;top:407px" width="7" height="6" fill="none" stroke="#999"><circle cx="2.500" cy="2.500" r="1.700"/><path d="M4 4l2 1.500"/></svg>
<svg style="left:720px;top:405px" width="92" height="10" fill="none" stroke="#b5b5b5" stroke-width=".9"><rect x="3.500" y="1" width="6" height="6"/><circle cx="3" cy="6" r="2"/><g fill="#c0c0c0" stroke="none"><circle cx="19" cy="2.500" r="2"/><rect x="17" y="5" width="4" height="4"/><rect x="21.500" y="3.500" width="3" height="3"/><path d="M33 6l4-4 3 0 0 3-4 4z"/><circle cx="52" cy="5" r="4.200"/></g><path d="M52 2.500v3.200M52 6.500v1.200" stroke="#333" stroke-width="1"/><path d="M67 1l1.200 2.700 3 .3-2.200 2 .7 3-2.700-1.600L64.300 9l.7-3-2.200-2 3-.3z" fill="#666" stroke="none"/><ellipse cx="83" cy="5" rx="4" ry="2.500"/><path d="M80 8.500l6-7"/></svg>
<div class="t" style="left:807px;top:403.500px;color:#aaa">26</div>
<!-- tree -->
<div style="left:0;top:416px;width:129px;height:216px;background:#383838"></div>
<div style="left:129px;top:416px;width:1px;height:216px;background:#232323"></div>
<div style="left:0;top:465px;width:129px;height:10px;background:#4b4b4b"></div>
<svg style="left:4px;top:419px" width="5" height="5"><path d="M0 0h5L2.500 4z" fill="#666"/></svg>
<svg style="left:11px;top:417px" width="9" height="9"><path d="M4.500 .5l1.200 2.700 3 .3-2.200 2 .7 3-2.700-1.600L1.800 8.500l.7-3L.3 3.500l3-.3z" fill="#c4c4c4"/></svg>
<div class="t b" style="left:22px;top:415px;color:#b5b5b5">Favorites</div>
<svg width="0" height="0"><defs><g id="mg" fill="none" stroke="#b0b0b0"><circle cx="3" cy="3" r="2.500"/><path d="M5 5l2.500 2.500"/></g><g id="fo"><path d="M0 0h3.500l1 1.500H9V7H0z" fill="#c8c8c8"/></g></defs></svg>
<svg style="left:20px;top:427px" width="8" height="8"><use href="#mg"/></svg>
<svg style="left:20px;top:437px" width="8" height="8"><use href="#mg"/></svg>
<svg style="left:20px;top:447px" width="8" height="8"><use href="#mg"/></svg>
<div class="t" style="left:30px;top:425px;color:#aaa">All Materials</div>
<div class="t" style="left:30px;top:435px;color:#aaa">All Models</div>
<div class="t" style="left:30px;top:445px;color:#aaa">All Prefabs</div>
<svg style="left:3px;top:467px" width="5" height="6"><path d="M0 0l4 2.500L0 5z" fill="#777"/></svg>
<svg style="left:3px;top:477px" width="5" height="6"><path d="M0 0l4 2.500L0 5z" fill="#777"/></svg>
<svg style="left:11px;top:467px" width="9" height="7"><use href="#fo"/></svg>
<svg style="left:11px;top:477px" width="9" height="7"><use href="#fo"/></svg>
<div class="t b" style="left:22px;top:464px;color:#b5b5b5">Assets</div>
<div class="t b" style="left:22px;top:474px;color:#b5b5b5">Packages</div>
<!-- assets grid -->
<div style="left:130px;top:416px;width:692px;height:216px;background:#333"></div>
<div style="left:130px;top:416px;width:692px;height:13px;background:#3e3e3e"></div>
<div class="t b" style="left:133px;top:415.500px;color:#b5b5b5">Assets</div>
<svg width="0" height="0"><defs><path id="fl" d="M2 0h14q2 0 3 2l3 5h20q3 0 3 3v27q0 3-3 3H3q-3 0-3-3V2q0-2 2-2z" fill="#c4c4c4"/></defs></svg>
<svg style="left:147px;top:447px" width="45" height="40"><use href="#fl"/></svg>
<svg style="left:214.500px;top:447px" width="45" height="40"><use href="#fl"/></svg>
<svg style="left:282px;top:447px" width="45" height="40"><use href="#fl"/></svg>
<svg style="left:349.500px;top:447px" width="45" height="40"><use href="#fl"/></svg>
<svg style="left:417px;top:447px" width="45" height="40"><use href="#fl"/></svg>
<svg style="left:484.500px;top:447px" width="45" height="40"><use href="#fl"/></svg>
<svg style="left:552px;top:447px" width="45" height="40"><use href="#fl"/></svg>
<div class="t" style="left:129px;width:80px;top:494px;text-align:center;font-size:7px;color:#a5a5a5">MixedRealityTookl...</div>
<div class="t" style="left:196px;width:80px;top:494px;text-align:center;font-size:7px;color:#a5a5a5">Model</div>
<div class="t" style="left:264px;width:80px;top:494px;text-align:center;font-size:7px;color:#a5a5a5">MRTK</div>
<div class="t" style="left:331px;width:80px;top:494px;text-align:center;font-size:7px;color:#a5a5a5">Scenes</div>
<div class="t" style="left:398px;width:80px;top:494px;text-align:center;font-size:7px;color:#a5a5a5">Scripts</div>
<div class="t" style="left:466px;width:80px;top:494px;text-align:center;font-size:7px;color:#a5a5a5">TextMesh Pro</div>
<div class="t" style="left:534px;width:80px;top:494px;text-align:center;font-size:7px;color:#a5a5a5">XR</div>
<div class="t" style="left:601px;width:80px;top:494px;text-align:center;font-size:7px;color:#a5a5a5">WSATestCertifica...</div>
<svg style="left:632px;top:455px" width="22" height="22"><rect x="1" y="2" width="15" height="15" fill="#efefe9"/><path d="M1 7l7.500 5L16 7" fill="none" stroke="#bbb"/><path d="M5 8l4-2 3 2" fill="#d8c28a"/><circle cx="16" cy="13" r="3" fill="none" stroke="#c89a3a" stroke-width="1.800"/><path d="M14 15l-5 5" stroke="#c89a3a" stroke-width="2"/></svg>
<div style="left:130px;top:618px;width:692px;height:14px;background:#3e3e3e"></div>
<div style="left:779px;top:624px;width:30px;height:1px;background:#666"></div>
<div style="left:805px;top:621.500px;width:6px;height:6px;background:#bbb;border-radius:50%"></div>

<!-- status bar -->
<div style="left:0;top:632px;width:1200px;height:13px;background:#191919"></div>
<svg style="left:2px;top:633px" width="9" height="11"><circle cx="4.500" cy="4.500" r="4.200" fill="#e4e4e4"/><path d="M4 8v3l3-3z" fill="#e4e4e4"/><rect x="3.800" y="2" width="1.400" height="3.500" fill="#333"/><rect x="3.800" y="6" width="1.400" height="1.200" fill="#333"/></svg>
<div class="t" style="left:13px;top:631.500px;color:#aaa">HoverExited</div>
<svg style="left:1137px;top:632px" width="60" height="12" fill="none"><path d="M3 3l2 1 2-2 1.500 2L11 3 9.500 6 11 9H8v2.500H4V9L2 7.500 3.500 6z" fill="#e0b32a"/><ellipse cx="23.500" cy="3.500" rx="3.500" ry="1.800" stroke="#c0c0c0"/><path d="M20 3.500v6c0 1 7 1 7 0v-6M20 6.500c0 1 7 1 7 0" stroke="#c0c0c0"/><circle cx="41" cy="6" r="4" stroke="#b0b0b0"/><path d="M37 2l8 8" stroke="#c0c0c0"/><circle cx="55" cy="6" r="4" stroke="#c4c4c4"/><path d="M53 6l1.500 1.500L57.500 4.500" stroke="#c4c4c4"/></svg>
</div></body></html>
